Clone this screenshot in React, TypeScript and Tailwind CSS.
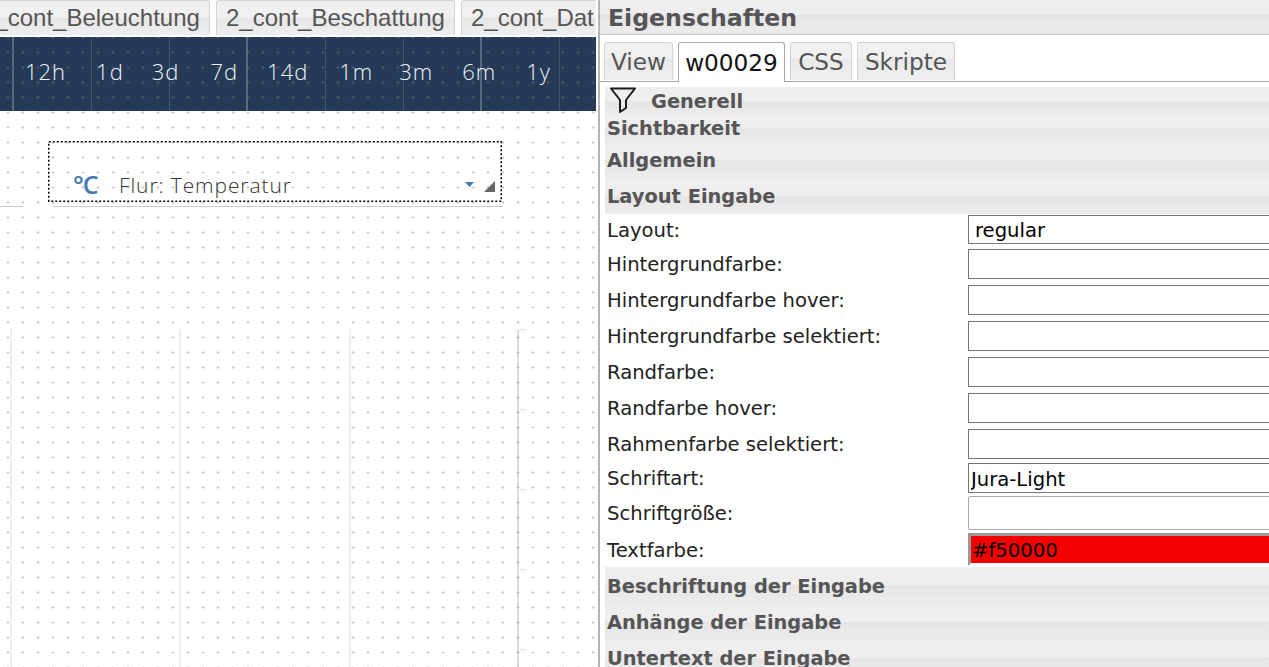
const band = "bg-[linear-gradient(#eeeeee_50%,#e5e5e5_50%,#ebebeb_calc(50%+14px))]";

const ranges = [
  { label: "12h", cls: "ml-[25px]" },
  { label: "1d", cls: "ml-[30px]" },
  { label: "3d", cls: "ml-[28px]" },
  { label: "7d", cls: "ml-[31px]" },
  { label: "14d", cls: "ml-[29px]" },
  { label: "1m", cls: "ml-[31px]" },
  { label: "3m", cls: "ml-[26px]" },
  { label: "6m", cls: "ml-[29px]" },
  { label: "1y", cls: "ml-[30px]" },
];

const barLines = [
  { cls: "left-[12px] w-[2px] bg-[#566a82]" },
  { cls: "left-[91px] w-px bg-[#41566f]" },
  { cls: "left-[169px] w-px bg-[#41566f]" },
  { cls: "left-[246px] w-[2px] bg-[#566a82]" },
  { cls: "left-[325px] w-px bg-[#41566f]" },
  { cls: "left-[403px] w-px bg-[#41566f]" },
  { cls: "left-[480px] w-[2px] bg-[#566a82]" },
  { cls: "left-[559px] w-px bg-[#41566f]" },
];

const rows = [
  { label: "Layout:", cls: "mt-px h-[29px]", input: "border border-[#767676] pl-[6px]", value: "regular" },
  { label: "Hintergrundfarbe:", cls: "mt-[5px] h-[30px]", input: "border border-[#767676]", value: "" },
  { label: "Hintergrundfarbe hover:", cls: "mt-[6px] h-[30px]", input: "border border-[#767676]", value: "" },
  { label: "Hintergrundfarbe selektiert:", cls: "mt-[6px] h-[30px]", input: "border border-[#767676]", value: "" },
  { label: "Randfarbe:", cls: "mt-[6px] h-[30px]", input: "border border-[#767676]", value: "" },
  { label: "Randfarbe hover:", cls: "mt-[6px] h-[30px]", input: "border border-[#767676]", value: "" },
  { label: "Rahmenfarbe selektiert:", cls: "mt-[6px] h-[30px]", input: "border border-[#767676]", value: "" },
  { label: "Schriftart:", cls: "mt-[4px] h-[30px]", input: "border border-[#767676] pl-[2px]", value: "Jura-Light" },
  { label: "Schriftgröße:", cls: "mt-[3px] h-[34px]", input: "border border-[#aaaaaa] rounded-[2px]", value: "" },
  {
    label: "Textfarbe:",
    cls: "mt-[3px] h-[33px]",
    input: "border-[3px] border-t-[#999999] border-l-[#999999] border-b-white border-r-white bg-[#f50000] pl-[1px]",
    value: "#f50000",
  },
];

function Funnel() {
  return (
    <svg viewBox="0 0 26 26" className="ml-[5px] h-[26px] w-[26px] shrink-0 self-start" fill="none" stroke="#1c1c1c" strokeWidth="2" strokeLinejoin="round">
      <path d="M1 1.5H25L16 13V21L10 25V13Z" />
    </svg>
  );
}

function Section({ title, cls }: { title: string; cls: string }) {
  return (
    <div className={`flex items-center pt-[2px] pl-[2px] text-[19.4px] leading-none font-bold text-[#555] ${band} ${cls}`}>
      {title}
    </div>
  );
}

function Designer() {
  return (
    <div className="flex w-[598px] shrink-0 flex-col">
      {/* open view tabs */}
      <div className="flex h-[37px] w-[596px] shrink-0 gap-[6px] overflow-hidden font-['Liberation_Sans',Arial,sans-serif] text-[24px] leading-[34px] text-[#555]">
        {[
          { name: "2_cont_Beleuchtung", cls: "-ml-[29px] w-[239px]" },
          { name: "2_cont_Beschattung", cls: "w-[239px]" },
          { name: "2_cont_Dat", cls: "w-[239px]" },
        ].map((tab) => (
          <div
            key={tab.name}
            className={`h-[35px] shrink-0 rounded-t-[3px] border border-b-0 border-[#d3d3d3] pl-[9px] whitespace-nowrap bg-[linear-gradient(#f0f0f0_17px,#e6e6e6_17px,#ededed_30px)] ${tab.cls}`}
          >
            {tab.name}
          </div>
        ))}
      </div>

      <div className="relative w-[596px] flex-1 overflow-hidden">
        {/* time range bar */}
        <div className="relative flex h-[74px] items-center bg-[#243a56] pb-[6px] font-['Open_Sans',sans-serif] text-[22px] font-light tracking-[1px] text-[#f0f4f8]">
          {barLines.map((line) => (
            <div key={line.cls} className={`absolute inset-y-0 ${line.cls}`} />
          ))}
          {ranges.map((r) => (
            <span key={r.label} className={`relative ${r.cls}`}>
              {r.label}
            </span>
          ))}
        </div>

        {/* widgets on the canvas */}
        <div className="absolute top-[169px] left-0 h-px w-[23px] bg-[#cccccc]" />
        <div className="absolute top-[169px] left-[53px] h-px w-[450px] bg-[#cccccc]" />
        <div className="absolute top-[104px] left-[48px] h-[61px] w-[454px]">
          <svg className="absolute inset-0 h-full w-full" fill="none">
            <rect x="0.75" y="0.75" width="452.5" height="59.5" stroke="#000" strokeWidth="1.5" strokeDasharray="2 2" />
          </svg>
          <span className="absolute top-[27px] left-[25px] font-['Open_Sans',sans-serif] text-[25px] leading-[32px] font-semibold tracking-[-1px] text-[#4479ad]">
            °C
          </span>
          <span className="absolute top-[29px] left-[71px] font-['Open_Sans',sans-serif] text-[21px] leading-[30px] font-light tracking-[0.9px] text-[#333]">
            Flur: Temperatur
          </span>
          <svg viewBox="0 0 9 5" className="absolute top-[41px] left-[417px] h-[5px] w-[9px]">
            <path d="M0 0H9L4.5 5Z" fill="#4479ad" />
          </svg>
          <svg viewBox="0 0 11 11" className="absolute top-[40px] left-[436px] h-[11px] w-[11px]">
            <path d="M11 0V11H0Z" fill="#666" />
          </svg>
        </div>

        {/* chart grid */}
        <svg className="absolute top-[292px] left-0 h-[338px] w-[596px]" fill="none" strokeWidth="2">
          <path d="M11 0V338M180 0V338M350 0V338" stroke="#ededed" />
          <path d="M518 0V338" stroke="#dddddd" />
          <path d="M518 1H526M518 81H526M518 161H526M518 241H526M518 321H526" stroke="#eeeeee" />
        </svg>

        {/* snap grid dots, over everything else in the view */}
        <div className="pointer-events-none absolute inset-0 bg-[radial-gradient(circle_at_7.5px_7.5px,rgba(130,130,130,0.42)_1.1px,transparent_1.3px)] bg-[size:15px_15px] bg-[position:0.5px_8px]" />
      </div>
    </div>
  );
}

function Properties() {
  return (
    <div className="min-w-0 flex-1 overflow-hidden border-l-2 border-[#b4b4b4] font-['DejaVu_Sans',sans-serif]">
      <div className="h-[35px] border-b border-[#cccccc] bg-[linear-gradient(#eeeeee_15px,#e5e5e5_15px,#ebebeb_29px)] pl-[8px] text-[23.6px] leading-[37px] font-bold text-[#555]">
        Eigenschaften
      </div>

      <div className="flex h-[47px] items-end gap-[5px] border-b border-[#aaaaaa] pl-[4px] text-[23.2px] text-[#555]">
        {["View", "w00029", "CSS", "Skripte"].map((tab) =>
          tab === "w00029" ? (
            <div key={tab} className="-mb-px flex h-[40px] w-[107px] items-center justify-center rounded-t-[3px] border border-b-0 border-[#aaaaaa] bg-white pt-[2px] text-[#111]">
              {tab}
            </div>
          ) : (
            <div
              key={tab}
              className={`mb-px flex h-[38px] items-center justify-center rounded-t-[3px] border border-b-0 border-[#d3d3d3] bg-[linear-gradient(#f0f0f0_16px,#e8e8e8_16px,#eeeeee_30px)] pt-[2px] ${tab === "View" ? "w-[69px]" : tab === "CSS" ? "w-[62px]" : "w-[98px]"}`}
            >
              {tab}
            </div>
          ),
        )}
      </div>

      <div className="mt-[5px] ml-[5px] w-[800px]">
        <div className={`flex h-[27px] items-center text-[19.4px] leading-none font-bold text-[#555] ${band}`}>
          <Funnel />
          <span className="ml-[15px] pt-[2px]">Generell</span>
        </div>
        <Section title="Sichtbarkeit" cls="h-[28px]" />
        <Section title="Allgemein" cls="h-[36px]" />
        <Section title="Layout Eingabe" cls="h-[36px]" />

        <div className="h-[352px] pl-[2px] text-[19.6px] text-[#222]">
          {rows.map((row) => (
            <div key={row.label} className={`flex items-center ${row.cls}`}>
              <label className="w-[361px] shrink-0 pt-[2px] whitespace-nowrap">{row.label}</label>
              <input readOnly value={row.value} className={`h-full w-[400px] pt-[2px] text-black outline-none ${row.input}`} />
            </div>
          ))}
        </div>

        <Section title="Beschriftung der Eingabe" cls="h-[37px]" />
        <Section title="Anhänge der Eingabe" cls="h-[36px]" />
        <Section title="Untertext der Eingabe" cls="h-[36px]" />
      </div>
    </div>
  );
}

export default function App() {
  return (
    <div className="flex h-[667px] w-[1269px] overflow-hidden bg-white">
      <Designer />
      <Properties />
    </div>
  );
}
